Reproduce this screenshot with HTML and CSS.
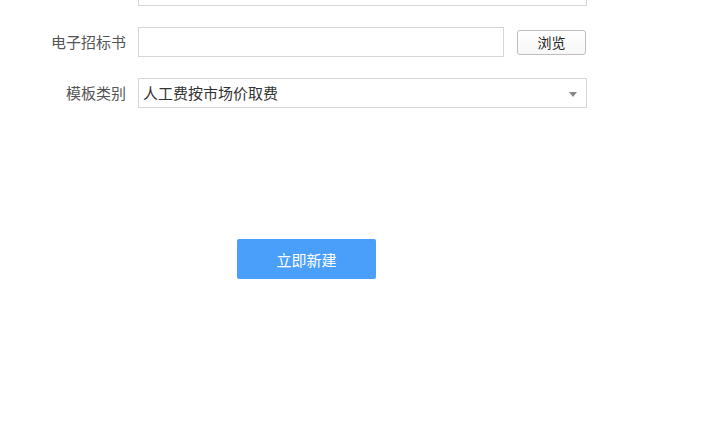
FILE: index.html
```html
<!DOCTYPE html>
<html lang="zh-CN">
<head>
<meta charset="utf-8">
<title>新建</title>
<link rel="stylesheet" href="styles.css">
</head>
<body>
<div class="form">
  <div class="row">
    <label class="label"></label>
    <div class="field field-full"></div>
  </div>
  <div class="row">
    <label class="label">电子招标书</label>
    <div class="field field-short"></div>
    <button class="browse" type="button">浏览</button>
  </div>
  <div class="row">
    <label class="label">模板类别</label>
    <div class="field field-full select">
      <span class="select-text">人工费按市场价取费</span>
      <span class="caret"></span>
    </div>
  </div>
</div>
<div class="actions">
  <button class="primary" type="button">立即新建</button>
</div>
</body>
</html>
```

FILE: styles.css
```css
* { box-sizing: border-box; }
html, body { margin: 0; padding: 0; background: #fff; }
body {
  font-family: "Noto Sans CJK SC", "Noto Sans", sans-serif;
  font-size: 15px;
  color: #333;
  width: 715px;
  height: 436px;
  overflow: hidden;
}
.form { margin-top: -24px; }
.row {
  display: flex;
  align-items: center;
  margin-bottom: 21px;
}
.row:last-child { margin-bottom: 0; }
.label {
  width: 138px;
  padding-right: 12px;
  text-align: right;
  color: #555;
  font-size: 15px;
  line-height: 20px;
}
.field {
  height: 30px;
  border: 1px solid #d6d6d6;
  background: #fff;
}
.field-full { width: 449px; }
.field-short { width: 366px; }
.browse {
  margin-left: 13px;
  width: 69px;
  height: 25px;
  border: 1px solid #bdbdbd;
  border-radius: 3px;
  background: linear-gradient(#ffffff, #f7f7f7);
  font-family: inherit;
  font-size: 14px;
  color: #222;
  padding: 0;
  line-height: 21px;
}
.select {
  display: flex;
  align-items: center;
  justify-content: space-between;
  padding: 0 9px 0 4px;
}
.select-text {
  color: #333;
  font-size: 15px;
  line-height: 20px;
}
.caret {
  width: 0;
  height: 0;
  border-left: 4px solid transparent;
  border-right: 4px solid transparent;
  border-top: 5px solid #888;
  margin-top: 2px;
}
.actions {
  padding-left: 237px;
  margin-top: 131px;
}
.primary {
  width: 139px;
  height: 40px;
  border: none;
  border-radius: 2px;
  background: #4a9ffb;
  color: #fff;
  font-family: inherit;
  font-size: 15px;
  padding: 0;
}
```
